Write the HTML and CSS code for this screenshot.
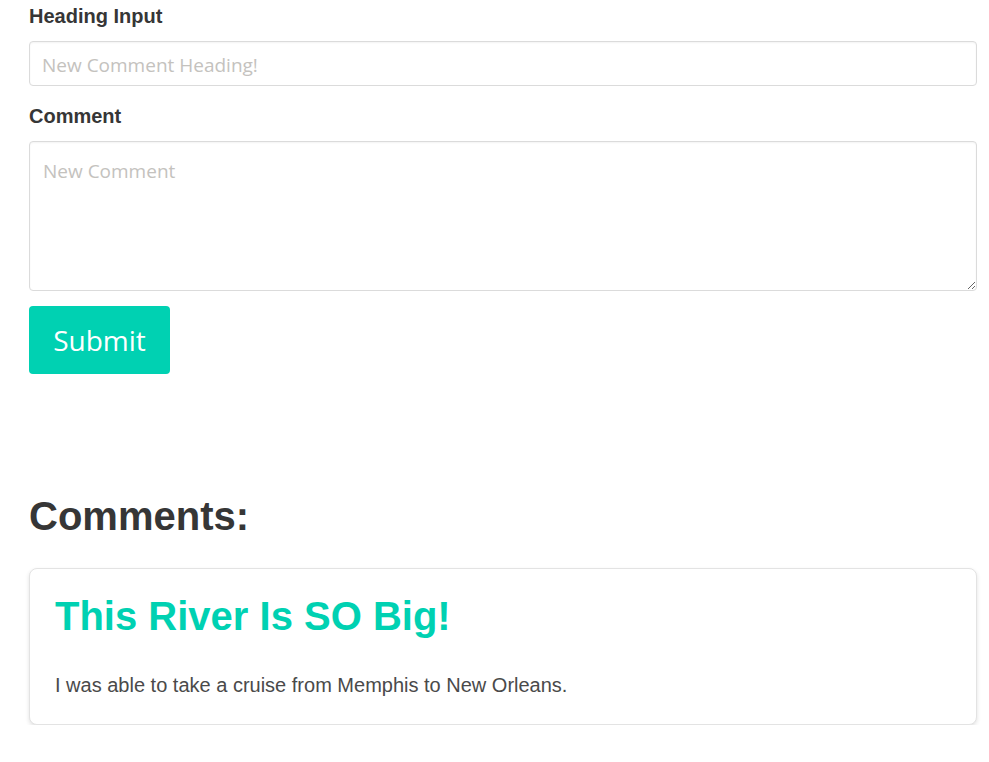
FILE: index.html
```html
<!DOCTYPE html>
<html lang="en">
<head>
<meta charset="utf-8">
<title>Comments</title>
<link rel="stylesheet" href="styles.css">
</head>
<body>
<main class="page">
  <form class="comment-form">
    <label class="label" for="heading">Heading Input</label>
    <input class="input" id="heading" type="text" placeholder="New Comment Heading!">
    <label class="label label-comment" for="comment">Comment</label>
    <textarea class="textarea" id="comment" placeholder="New Comment"></textarea>
    <button class="button" type="button">Submit</button>
  </form>

  <section class="comments">
    <h2 class="comments-title">Comments:</h2>
    <article class="box">
      <h3 class="box-title">This River Is SO Big!</h3>
      <p class="box-text">I was able to take a cruise from Memphis to New Orleans.</p>
    </article>
  </section>
</main>
</body>
</html>
```

FILE: styles.css
```css
html, body {
  margin: 0;
  padding: 0;
  background: #ffffff;
}

body {
  font-family: "Liberation Sans", Arial, sans-serif;
  font-size: 20px;
  line-height: 1.5;
  color: #4a4a4a;
}

.page {
  margin: 0 12px 0 29px;
}

.comment-form {
  display: flex;
  flex-direction: column;
  align-items: stretch;
}

.label {
  display: block;
  font-weight: 700;
  font-size: 20px;
  line-height: 30px;
  color: #363636;
  padding-top: 1px;
  margin-bottom: 10px;
}

.label-comment {
  margin-top: 14px;
}

.input,
.textarea {
  box-sizing: border-box;
  width: 100%;
  margin: 0;
  border: 1px solid #dbdbdb;
  border-radius: 4px;
  background: #ffffff;
  font-family: "Open Sans", "Noto Sans", sans-serif;
  font-size: 19px;
  color: #363636;
  box-shadow: inset 0 1px 2px rgba(10, 10, 10, 0.05);
  outline: none;
}

.input {
  height: 45px;
  padding: 2px 12px 0;
}

.textarea {
  height: 150px;
  padding: 15px 13px 13px;
  line-height: 1.5;
  resize: vertical;
  display: block;
}

.input::placeholder,
.textarea::placeholder {
  color: #c4c2be;
  opacity: 1;
}

.button {
  align-self: flex-start;
  margin-top: 15px;
  width: 141px;
  height: 68px;
  border: none;
  border-radius: 4px;
  background: #00d1b2;
  color: #ffffff;
  font-family: "Open Sans", "Noto Sans", sans-serif;
  font-size: 28px;
  padding: 0;
  cursor: pointer;
}

.comments {
  margin-top: 120px;
}

.comments-title {
  margin: 0 0 29px;
  font-size: 40px;
  line-height: 45px;
  font-weight: 700;
  color: #363636;
}

.box {
  border: 1px solid #e3e3e3;
  border-radius: 8px;
  box-shadow: 0 2px 4px rgba(10, 10, 10, 0.12);
  padding: 25px 25px 24px 25px;
  background: #ffffff;
}

.box-title {
  margin: 0 0 31px;
  font-size: 40px;
  line-height: 45px;
  font-weight: 700;
  color: #00d1b2;
}

.box-text {
  margin: 0;
  font-size: 20px;
  line-height: 30px;
  color: #4a4a4a;
}
```
